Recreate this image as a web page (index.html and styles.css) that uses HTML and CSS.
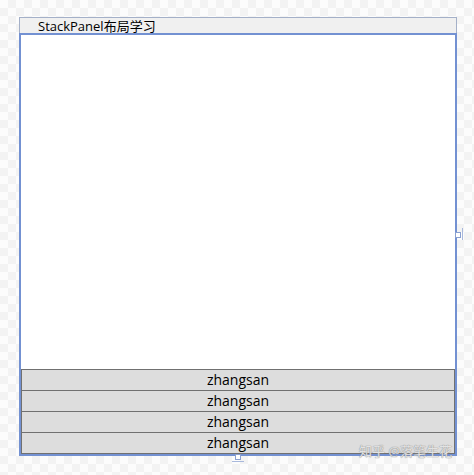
FILE: index.html
```html
<!DOCTYPE html>
<html>
<head>
    <meta charset="utf-8">
    <link rel="stylesheet" href="styles.css">
    <title>StackPanel布局学习</title>
</head>
<body>
    <div class="window">
        <div class="title-bar">StackPanel布局学习</div>
        <div class="client">
            <div class="stack">
                <div class="item">zhangsan</div>
                <div class="item">zhangsan</div>
                <div class="item">zhangsan</div>
                <div class="item">zhangsan</div>
            </div>
        </div>
        <!-- resize grips of the designer -->
        <span class="grip grip-right"></span>
        <span class="grip-line grip-line-right"></span>
        <span class="grip grip-bottom"></span>
        <span class="grip-line grip-line-bottom"></span>
    </div>
    <div class="watermark">知乎 @落笔生花</div>
</body>
</html>
```

FILE: styles.css
```css
html, body {
    margin: 0;
    height: 100%;
}

body {
    font-family: "Open Sans", "Noto Sans CJK SC", sans-serif;
    color: #000;
    background-color: #fbfbfb;
    background-image: repeating-conic-gradient(#f3f3f3 0 25%, #fcfcfc 0 50%);
    background-size: 16px 16px;
    padding: 17px 0 0 19px;
    box-sizing: border-box;
    position: relative;
}

.window {
    position: relative;
    width: 438px;
}

.title-bar {
    height: 16px;
    box-sizing: border-box;
    border-top: 1px solid #a4b0c8;
    border-left: 1px solid #a4b0c8;
    border-right: 1px solid #a4b0c8;
    background-color: #f0f0f0;
    padding-left: 18px;
    font-size: 13px;
    line-height: 16px;
}

.client {
    height: 423px;
    box-sizing: border-box;
    border: 2px solid #7391d2;
    background-color: #fff;
    display: flex;
    flex-direction: column;
    justify-content: flex-end;
}

.stack {
    display: flex;
    flex-direction: column;
}

.item {
    height: 21px;
    box-sizing: border-box;
    border: 1px solid #707070;
    border-bottom: 0;
    background-color: #dddddd;
    text-align: center;
    font-size: 14px;
    line-height: 19px;
}

.item:last-child {
    border-bottom: 1px solid #707070;
    height: 22px;
}

.grip {
    position: absolute;
    width: 4px;
    height: 4px;
    border: 1px solid #8aa0d0;
    background-color: #fff;
}

.grip-right {
    left: 436px;
    top: 215px;
}

.grip-bottom {
    left: 216px;
    top: 437px;
}

.grip-line {
    position: absolute;
    background-color: #a8b8dc;
}

.grip-line-right {
    left: 443px;
    top: 211px;
    width: 1px;
    height: 12px;
}

.grip-line-bottom {
    left: 213px;
    top: 444px;
    width: 12px;
    height: 1px;
}

.watermark {
    position: absolute;
    left: 359px;
    top: 443px;
    font-size: 13px;
    line-height: 16px;
    color: rgba(255, 255, 255, 0.75);
    text-shadow: 0 0 1px #8d8d8d, 0 0 1px #8d8d8d;
}
```
